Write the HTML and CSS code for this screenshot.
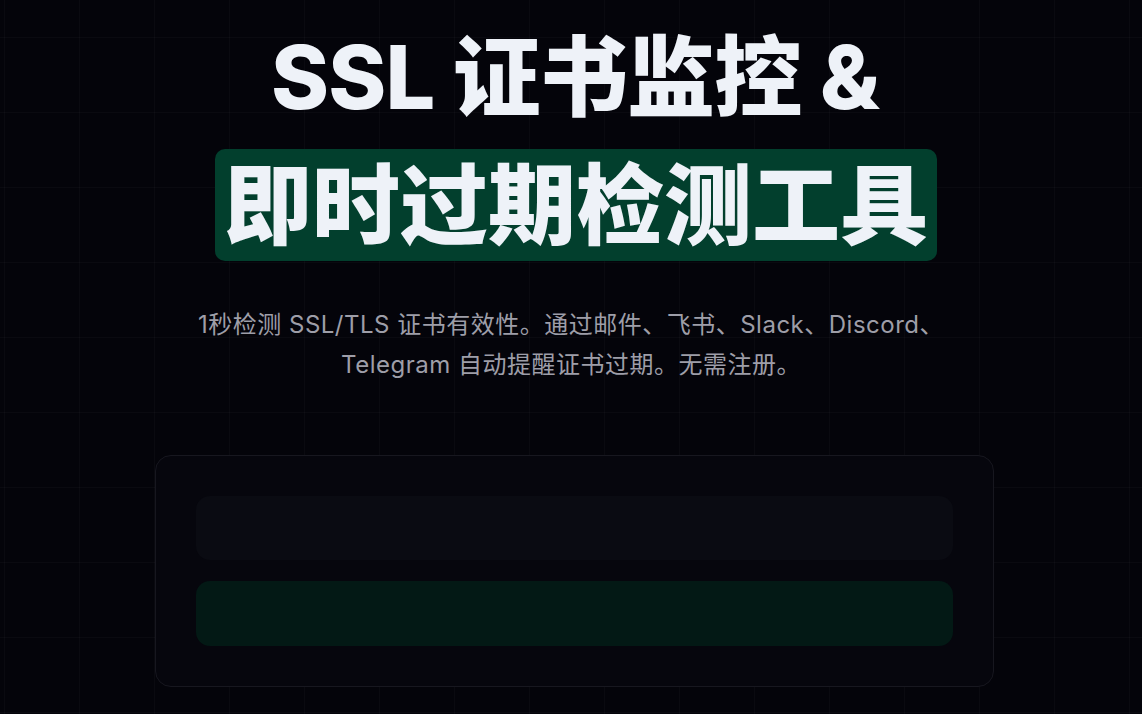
FILE: index.html
```html
<!DOCTYPE html>
<html lang="zh-CN">
<head>
<meta charset="utf-8">
<title>SSL 证书监控</title>
<link rel="stylesheet" href="styles.css">
</head>
<body>
<main class="hero">
  <h1 class="title">
    <span class="title-line">SSL 证书监控 &amp;</span>
    <span class="title-mark">即时过期检测工具</span>
  </h1>
  <p class="lead">1秒检测 SSL/TLS 证书有效性。通过邮件、飞书、Slack、Discord、Telegram 自动提醒证书过期。无需注册。</p>
  <form class="card">
    <div class="field"></div>
    <div class="submit"></div>
  </form>
</main>
</body>
</html>
```
FILE: styles.css
```css
html, body {
  margin: 0;
  padding: 0;
}
body {
  min-height: 714px;
  background-color: #04040a;
  background-image:
    linear-gradient(to right, rgba(255,255,255,0.022) 1px, transparent 1px),
    linear-gradient(to bottom, rgba(255,255,255,0.022) 1px, transparent 1px);
  background-size: 75px 75px;
  background-position: 4px 37px;
  font-family: Inter, "Noto Sans CJK SC", sans-serif;
  color: #eef2f8;
}
.hero {
  display: flex;
  flex-direction: column;
  align-items: center;
  padding-top: 29px;
}
.title {
  margin: 0;
  display: flex;
  flex-direction: column;
  align-items: center;
  font-size: 88px;
  font-weight: 800;
  letter-spacing: -0.01em;
  color: #eef2f8;
}
.title-line {
  display: block;
  line-height: 97px;
  padding-left: 8px;
}
.title-mark {
  display: block;
  margin-top: 23px;
  padding: 8px 9px;
  line-height: 96px;
  letter-spacing: 0;
  background: #023f2d;
  border-radius: 10px;
  margin-left: 10px;
}
.lead {
  margin: 44px 0 0;
  max-width: 775px;
  text-align: center;
  font-size: 24px;
  letter-spacing: 0.5px;
  line-height: 40px;
  color: #9e9ea8;
  font-weight: 400;
}
.card {
  box-sizing: border-box;
  width: 839px;
  margin: 70px 0 0 7px;
  padding: 40px;
  display: flex;
  flex-direction: column;
  gap: 21px;
  background: #06060d;
  border: 1px solid #17171f;
  border-radius: 16px;
}
.field {
  height: 64px;
  border-radius: 14px;
  background: #0a0b12;
}
.submit {
  height: 65px;
  border-radius: 14px;
  background: #031915;
}
```
